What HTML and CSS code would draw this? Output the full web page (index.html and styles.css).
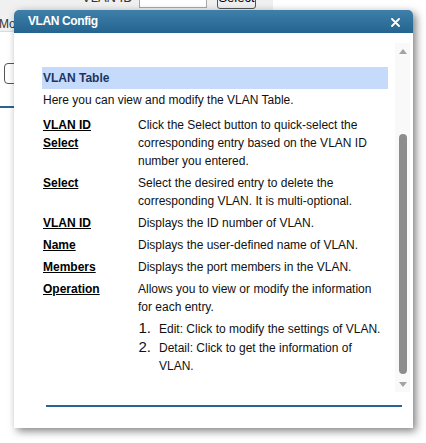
FILE: index.html
```html
<!DOCTYPE html>
<html>
<head>
<meta charset="utf-8">
<link rel="stylesheet" href="styles.css">
</head>
<body>
<div class="page">
  <div class="panel">
    <div class="form-row">
      <span class="form-label">VLAN ID</span>
      <span class="form-input"></span>
      <span class="form-btn">Select</span>
    </div>
    <div class="tab">Mo</div>
  </div>
  <div class="field-edge"></div>
  <div class="blue-rule"></div>
</div>

<div class="dialog">
  <div class="dlg-head">
    <span class="dlg-title">VLAN Config</span>
    <svg class="dlg-close" width="9" height="9" viewBox="0 0 9 9"><path d="M1 1L8 8M8 1L1 8" stroke="#fff" stroke-width="1.8" stroke-linecap="round"/></svg>
  </div>
  <div class="dlg-body">
    <div class="scroller">
      <div class="content">
        <div class="sec-title">VLAN Table</div>
        <p class="intro">Here you can view and modify the VLAN Table.</p>
        <div class="defs">
          <div class="row first">
            <span class="term">VLAN ID<br>Select</span>
            <span class="desc">Click the Select button to quick-select the corresponding entry based on the VLAN ID number you entered.</span>
          </div>
          <div class="row">
            <span class="term">Select</span>
            <span class="desc">Select the desired entry to delete the corresponding VLAN. It is multi-optional.</span>
          </div>
          <div class="row">
            <span class="term">VLAN ID</span>
            <span class="desc">Displays the ID number of VLAN.</span>
          </div>
          <div class="row">
            <span class="term">Name</span>
            <span class="desc">Displays the user-defined name of VLAN.</span>
          </div>
          <div class="row">
            <span class="term">Members</span>
            <span class="desc">Displays the port members in the VLAN.</span>
          </div>
          <div class="row">
            <span class="term">Operation</span>
            <span class="desc">Allows you to view or modify the information for each entry.</span>
          </div>
        </div>
        <ol class="steps">
          <li class="step"><span class="num">1.</span><span class="step-text">Edit: Click to modify the settings of VLAN.</span></li>
          <li class="step"><span class="num">2.</span><span class="step-text">Detail: Click to get the information of VLAN.</span></li>
        </ol>
      </div>
      <div class="sbar">
        <span class="arrow-up"></span>
        <span class="thumb"></span>
        <span class="arrow-down"></span>
      </div>
    </div>
    <div class="foot-rule"></div>
  </div>
</div>
</body>
</html>
```

FILE: styles.css
```css
* { box-sizing: border-box; }
html, body {
  margin: 0;
  padding: 0;
  background: #fff;
  font-family: "Liberation Sans", Arial, sans-serif;
  font-size: 12px;
  color: #000;
  overflow: hidden;
}
.page {
  width: 426px;
  height: 443px;
}
.panel {
  width: 273px;
  height: 32px;
  background: #f0f0f0;
  border-bottom: 1px solid #dcdcdc;
}
.form-row {
  display: flex;
  align-items: flex-end;
  height: 9px;
  padding-left: 82px;
  overflow: visible;
}
.form-label {
  font-size: 13px;
  line-height: 13px;
  color: #333;
  margin-bottom: 5px;
  width: 57px;
}
.form-input {
  display: block;
  width: 68px;
  height: 20px;
  margin-bottom: 1px;
  background: #fff;
  border: 1px solid #a9a9a9;
}
.form-btn {
  display: block;
  width: 39px;
  height: 22px;
  margin-left: 10px;
  border: 1px solid #555;
  border-radius: 3px;
  background: #efefef;
  font-size: 13px;
  line-height: 20px;
  text-align: center;
  color: #000;
  overflow: hidden;
}
.tab {
  margin-left: -1px;
  margin-top: 8px;
  font-size: 12px;
  line-height: 14px;
  color: #333;
}
.field-edge {
  width: 40px;
  height: 21px;
  margin-top: 31px;
  margin-left: 4px;
  border: 1px solid #555;
  border-radius: 4px;
}
.blue-rule {
  width: 120px;
  height: 2px;
  margin-top: 22px;
  background: #2a6496;
}

.dialog {
  position: absolute;
  left: 14px;
  top: 10px;
  width: 399px;
  height: 418px;
  background: #fff;
  border-radius: 5px 5px 0 0;
  box-shadow: 3px 3px 9px rgba(0, 0, 0, 0.5);
  display: flex;
  flex-direction: column;
}
.dlg-head {
  height: 23px;
  flex: none;
  display: flex;
  align-items: center;
  justify-content: space-between;
  padding: 0 13px 0 14px;
  background: linear-gradient(#3f80aa, #246490);
  border-radius: 5px 5px 0 0;
}
.dlg-title {
  color: #fff;
  font-weight: bold;
  font-size: 12px;
  letter-spacing: -0.4px;
  line-height: 23px;
}
.dlg-close {
  display: block;
  margin-top: 1px;
}
.dlg-body {
  flex: 1;
  padding: 10px 3px 0 14px;
}
.scroller {
  display: flex;
  height: 349px;
}
.content {
  flex: 1;
  overflow: hidden;
  padding: 0 7px 0 14px;
}
.sec-title {
  margin-top: 24px;
  height: 22px;
  line-height: 22px;
  padding-left: 1px;
  background: #c6dafc;
  color: #1c3560;
  font-weight: bold;
}
.intro {
  margin: 2px 0 0 1px;
  line-height: 18px;
  color: #111;
}
.defs {
  margin-top: 7px;
}
.row {
  display: grid;
  grid-template-columns: 96px 1fr;
  line-height: 18px;
  margin-top: 4px;
}
.row.first {
  margin-top: 0;
}
.term {
  padding-left: 1px;
  font-weight: bold;
  text-decoration: underline;
  color: #000;
}
.desc {
  color: #111;
}
.steps {
  list-style: none;
  margin: 4px 4px 0 96px;
  padding: 0;
}
.step {
  display: flex;
  align-items: baseline;
  line-height: 18px;
}
.step + .step {
  margin-top: 1px;
}
.num {
  flex: none;
  width: 13px;
  text-align: right;
  font-size: 15px;
  line-height: 15px;
  margin-right: 8px;
  color: #111;
}
.step-text {
  color: #111;
}
.sbar {
  flex: none;
  width: 15px;
  background: #f9f9f9;
  display: flex;
  flex-direction: column;
  align-items: center;
  padding-top: 6px;
}
.arrow-up {
  display: block;
  width: 0;
  height: 0;
  border-left: 4px solid transparent;
  border-right: 4px solid transparent;
  border-bottom: 5px solid #a3a3a3;
}
.thumb {
  display: block;
  width: 8px;
  height: 240px;
  margin-top: 80px;
  border-radius: 4px;
  background: #8c8c8c;
}
.arrow-down {
  display: block;
  width: 0;
  height: 0;
  margin-top: 8px;
  border-left: 4px solid transparent;
  border-right: 4px solid transparent;
  border-top: 5px solid #a3a3a3;
}
.foot-rule {
  height: 2px;
  margin: 13px 8px 0 18px;
  background: #286593;
}
```
